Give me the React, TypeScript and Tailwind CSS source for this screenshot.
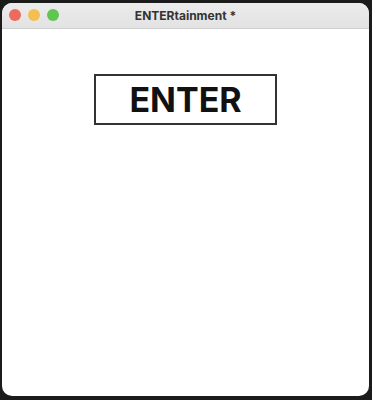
import React from 'react';

const App: React.FC = () => {
  return (
    <div className="w-[372px] h-[400px] bg-[#1b1b1b] pt-[3px] pl-[2px]" style={{ fontFamily: 'Inter, "Liberation Sans", sans-serif' }}>
      <div className="w-[367px] h-[393px] bg-white rounded-[10px] overflow-hidden flex flex-col">
        {/* Title bar */}
        <div className="relative h-[26px] bg-gradient-to-b from-[#ececec] to-[#e2e2e2] border-b border-[#cfcfcf] flex items-center justify-center">
          <div className="absolute left-[7px] top-[6px] flex gap-[7px]">
            <span className="w-[12px] h-[12px] rounded-full bg-[#ed6a5e]"></span>
            <span className="w-[12px] h-[12px] rounded-full bg-[#f5bf4f]"></span>
            <span className="w-[12px] h-[12px] rounded-full bg-[#61c554]"></span>
          </div>
          <span className="text-[12px] font-bold text-[#333] leading-none">ENTERtainment *</span>
        </div>

        {/* Content */}
        <div className="flex-1 flex justify-center pt-[45px]">
          <div className="w-[183px] h-[51px] border-2 border-[#333] flex items-center justify-center">
            <span className="text-[34px] font-bold text-[#111] leading-none">ENTER</span>
          </div>
        </div>
      </div>
    </div>
  );
};

export default App;
